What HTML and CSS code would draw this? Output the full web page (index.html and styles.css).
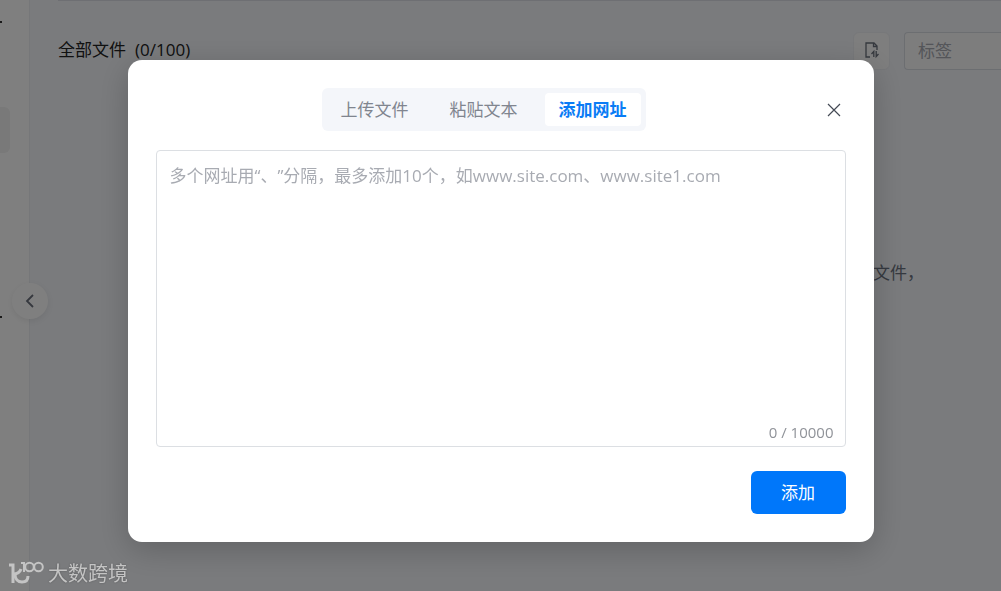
FILE: index.html
```html
<!DOCTYPE html>
<html lang="zh-CN">
<head>
<meta charset="utf-8">
<title>添加网址</title>
<link rel="stylesheet" href="styles.css">
</head>
<body>
<div class="app">
  <aside class="sidebar">
    <span class="dot"></span>
    <div class="nav-item"></div>
    <span class="dot dot-low"></span>
    <button class="collapse" type="button" aria-label="收起">
      <svg width="10" height="16" viewBox="0 0 10 16"><path d="M8 2 2 8l6 6" fill="none" stroke="currentColor" stroke-width="1.8"/></svg>
    </button>
  </aside>
  <main class="main">
    <div class="divider"></div>
    <header class="toolbar">
      <h1 class="title"><span>全部文件</span><span>(0/100)</span></h1>
      <button class="sort" type="button" aria-label="排序">
        <svg width="16" height="18" viewBox="0 0 16 18" fill="none" stroke="currentColor" stroke-width="1.3"><path d="M6 15H2V1h8l3 3v4M9.500 1v3.500H13"/><path d="M9.800 15v-5.500L7.500 12M12.200 9v5.500L14.500 12"/></svg>
      </button>
      <input class="tag" type="text" placeholder="标签" aria-label="标签">
    </header>
    <p class="empty">文件，</p>
  </main>
</div>
<div class="overlay">
  <section class="modal" role="dialog" aria-modal="true" aria-label="添加网址">
    <header class="modal-head">
      <div class="tabs" role="tablist">
        <button class="tab" type="button" role="tab">上传文件</button>
        <button class="tab" type="button" role="tab">粘贴文本</button>
        <button class="tab tab-active" type="button" role="tab" aria-selected="true">添加网址</button>
      </div>
      <button class="close" type="button" aria-label="关闭">
        <svg width="14" height="14" viewBox="0 0 14 14"><path d="m1 1 12 12M13 1 1 13" fill="none" stroke="currentColor" stroke-width="1.200"/></svg>
      </button>
    </header>
    <div class="field">
      <textarea class="urls" aria-label="网址" placeholder="多个网址用“、”分隔，最多添加10个，如www.site.com、www.site1.com"></textarea>
      <span class="count">0 / 10000</span>
    </div>
    <footer class="modal-foot"><button class="submit" type="button">添加</button></footer>
  </section>
</div>
<div class="brand">
  <svg width="36" height="26" viewBox="0 0 36 26" fill="none" stroke="currentColor"><path d="M1 4h4v18" stroke-width="3"/><path d="M5 13c4 0 7-2 8-5M7 13c0 5 3 8 7 8s6-2 6-6" stroke-width="3"/><path d="M13 2h3v9" stroke-width="2"/><circle cx="21.500" cy="6" r="4.300" stroke-width="2"/><circle cx="30.500" cy="6" r="4.300" stroke-width="2"/></svg>
  <span>大数跨境</span>
</div>
</body>
</html>
```
FILE: styles.css
```css
* { box-sizing: border-box; }
body {
  margin: 0;
  font-family: "Open Sans", "Noto Sans CJK SC", sans-serif;
  font-size: 17px;
  line-height: 24px;
  text-spacing-trim: space-all;
  overflow: hidden;
}
button, input, textarea { font: inherit; }
button { padding: 0; border: 0; cursor: pointer; }
svg { display: block; }

.app { display: flex; min-height: 100vh; background: #f4f6fa; }
.sidebar {
  position: relative;
  flex: 0 0 30px;
  background: #fff;
  border-right: 1px solid #eceff3;
}
.nav-item { width: 10px; height: 46px; margin-top: 107px; border-radius: 0 6px 6px 0; background: #f2f2f2; }
.dot { position: absolute; left: 0; top: 21px; width: 2px; height: 2px; background: #333; }
.dot-low { top: 316px; }
.collapse {
  position: absolute;
  top: 283px;
  left: 12px;
  display: grid;
  place-items: center;
  width: 36px;
  height: 36px;
  border-radius: 50%;
  background: #fff;
  color: #6b717c;
  box-shadow: 0 2px 6px rgba(0, 0, 0, .08);
}
.main { flex: 1; min-width: 0; padding-left: 28px; }
.divider { height: 1px; background: #dcdfe6; }
.toolbar { display: flex; align-items: center; margin-top: 31px; }
.title { display: flex; gap: 9px; flex: 1; margin: 0; padding-bottom: 2px; font-size: 17px; line-height: 24px; font-weight: 400; color: #222; }
.sort {
  display: grid;
  place-items: center;
  width: 37px;
  height: 38px;
  margin-right: 14px;
  border: 1px solid #eff1f4;
  border-radius: 6px;
  background: #fcfcfd;
  color: #6b717c;
}
.tag {
  width: 97px;
  height: 38px;
  padding: 0 13px 2px;
  border: 1px solid #d9dce3;
  border-right: 0;
  border-radius: 4px 0 0 4px;
  background: #fafafb;
}
.tag::placeholder { color: #a8abb2; opacity: 1; }
.empty { margin: 191px 77px 0 0; text-align: right; color: #6b7280; }

.overlay {
  position: fixed;
  inset: 0;
  display: flex;
  align-items: flex-start;
  justify-content: center;
  padding: 60px 40px;
  background: rgba(0, 0, 0, .5);
}
.modal {
  width: 100%;
  max-width: 746px;
  padding: 28px;
  border-radius: 14px;
  background: #fff;
  box-shadow: 0 8px 32px rgba(0, 0, 0, .2);
}
.modal-head { display: grid; grid-template-columns: 1fr auto; gap: 10px; align-items: center; }
.tabs { justify-self: center; display: flex; gap: 13px; padding: 5px; border-radius: 6px; background: #f4f6fa; }
.tab { width: 96px; height: 33px; border-radius: 4px; background: transparent; color: #80858f; }
.tab-active { background: #fff; color: #0a7cf5; font-weight: 700; }
.close { padding: 5px; background: none; color: #444a55; }
.field { position: relative; margin-top: 19px; }
.urls {
  display: block;
  width: 100%;
  height: 297px;
  padding: 13px;
  border: 1px solid #dcdfe3;
  border-radius: 4px;
  resize: none;
}
.urls::placeholder { color: #a8abb2; opacity: 1; }
.count { position: absolute; right: 12px; bottom: 5px; font-size: 15px; line-height: 20px; color: #909399; }
.modal-foot { display: flex; justify-content: flex-end; margin-top: 24px; }
.submit { width: 95px; height: 43px; border-radius: 6px; background: #0077fa; color: #fff; }
.brand {
  position: fixed;
  left: 8px;
  bottom: 4px;
  display: flex;
  align-items: center;
  gap: 4px;
  font-size: 20px;
  line-height: 26px;
  color: #c4c4c4;
  text-shadow: 0 0 2px rgba(0, 0, 0, .3);
}
```
